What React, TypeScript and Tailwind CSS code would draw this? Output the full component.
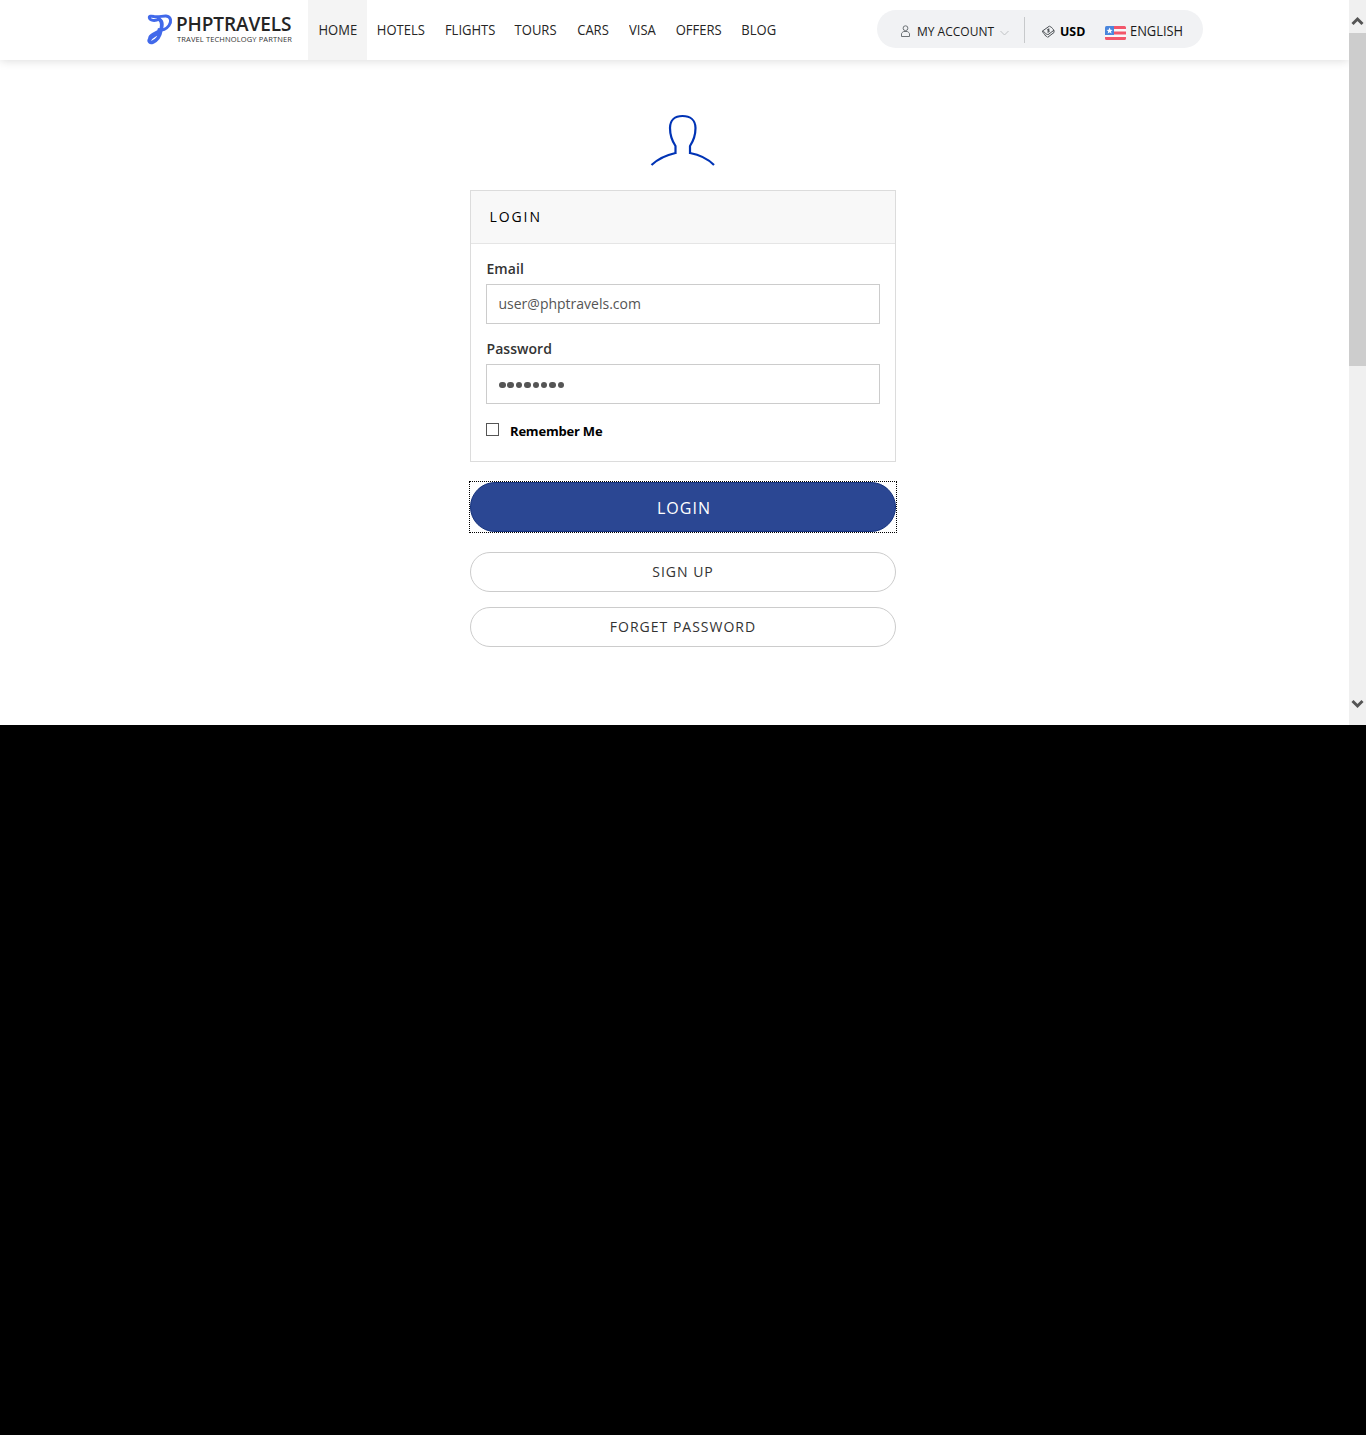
import React from "react";

const navItems = [
  { label: "HOME", width: "w-[59px] bg-[#f4f4f4]" },
  { label: "HOTELS", width: "w-[68px]" },
  { label: "FLIGHTS", width: "w-[70px]" },
  { label: "TOURS", width: "w-[62px]" },
  { label: "CARS", width: "w-[52px]" },
  { label: "VISA", width: "w-[47px]" },
  { label: "OFFERS", width: "w-[66px]" },
  { label: "BLOG", width: "w-[54px]" },
];

function Logo() {
  return (
    <a href="#" className="ml-[147px] mt-[14px] flex h-8 w-[161px] shrink-0">
      <svg width="26" height="32" viewBox="0 0 26 32" fill="none" stroke="#4169ea" strokeLinecap="round" strokeLinejoin="round">
        <path d="M12 5C8 7.500 3 6.500 2.400 4C2 2.200 4 1.800 7 2.500C12 3.500 15 1.800 19 2C24.500 2.500 24.500 8 22 11.500C19.500 15 15 17 12 15.500" strokeWidth="3" />
        <path d="M12.500 5.500C16 8 15 12 14 16C13 22 9.500 26.500 6 28C3 29.200 1.500 27.500 2.500 25.500C4.500 22 9.500 21 12.500 17.500" strokeWidth="3.600" />
        <path d="M2.500 23.500C4 19 9 19.500 13 16" strokeWidth="2.500" />
      </svg>
      <span className="flex w-[120px] flex-col">
        <span className="block h-[21px] w-[120px] whitespace-nowrap pl-[3px] text-[19px] font-semibold leading-[20px] tracking-[-0.1px] text-[#252525]">PHPTRAVELS</span>
        <span className="block h-[9px] whitespace-nowrap pl-[4px] text-[7.500px] leading-[9px] tracking-[0.130px] text-[#333]">TRAVEL TECHNOLOGY PARTNER</span>
      </span>
    </a>
  );
}

function UserIcon() {
  return (
    <svg className="mt-[4px]" width="11" height="13" viewBox="0 0 11 13" fill="none" stroke="#6e7377" strokeWidth="1">
      <circle cx="5.500" cy="3.200" r="2.400" />
      <path d="M1.500 11.500V9C1.500 7.800 2.200 7.500 3.700 6.500H7.300C8.800 7.500 9.500 7.800 9.500 9V11.500Z" />
    </svg>
  );
}

function MoneyIcon() {
  return (
    <svg className="mt-[4px]" width="14" height="14" viewBox="0 0 14 14" fill="none" stroke="#4a4f53" strokeWidth="1">
      <path d="M.5 6L7.500 1C8.500 2.500 10 2 10.500 3.500C10.800 4.500 11.500 4.500 12 5.200L6 9.700C5 9 4.200 9.500 3.500 8.300C3 7 1.700 7.300 .5 6Z" />
      <path d="M.5 6C1 8.500 2.500 8.500 3 10C4 12 5 11 5.700 12.300L12 7.500V5.200" />
      <path d="M7.500 4.300C6 3.700 5.200 4.700 6.300 5.400C7.800 6 7 7.500 5.300 6.800" strokeWidth="1.200" />
    </svg>
  );
}

function Flag() {
  return (
    <svg className="mt-[5px]" width="21" height="14" viewBox="0 0 21 14">
      <rect width="21" height="14" rx="1.500" fill="#f7f8fa" />
      <path d="M9 0H19.500Q21 0 21 1.500V3H9ZM9 5.500H21V8.500H9ZM0 11H21V12.500Q21 14 19.500 14H1.500Q0 14 0 12.500Z" fill="#f2566a" />
      <path d="M1.500 0H9V9H0V1.500Q0 0 1.500 0Z" fill="#4a86dc" />
      <path d="M4.600 1.600L5.500 3.700L7.700 3.900L6 5.300L6.500 7.500L4.600 6.300L2.700 7.500L3.200 5.300L1.500 3.900L3.700 3.700Z" fill="#fff" />
    </svg>
  );
}

function Header() {
  return (
    <header className="flex h-[60px] w-[1349px] bg-white shadow-[0_0_10px_rgba(0,0,0,0.17)]">
      <Logo />
      <nav className="flex w-[569px] shrink-0 text-[14px] text-[#252525]">
        {navItems.map((item) => (
          <a key={item.label} href="#" className={`flex h-[60px] shrink-0 items-center justify-center whitespace-nowrap pb-px ${item.width}`}>
            <span className="scale-x-[0.93]">{item.label}</span>
          </a>
        ))}
      </nav>
      <div className="mt-[10px] flex h-[38px] w-[326px] shrink-0 rounded-full bg-[#f1f2f4] pl-[23px] pt-[11px] text-[12px] leading-5 text-[#1b1b1b]">
        <span className="w-[17px]"><UserIcon /></span>
        <span className="w-[83px] origin-left scale-x-[0.96] whitespace-nowrap pt-px text-[12.500px]">MY ACCOUNT</span>
        <svg className="mt-[9px]" width="9" height="7" viewBox="0 0 9 7" fill="none" stroke="#bfc2c4"><path d="M.5 1L4.500 5L8.500 1" /></svg>
        <span className="-mt-[4px] ml-[15px] h-[26px] w-px bg-[#c7c9cb]" />
        <span className="ml-[17px] w-[18px]"><MoneyIcon /></span>
        <span className="w-[45px] origin-left scale-x-[0.95] text-[13px] font-bold text-black">USD</span>
        <Flag />
        <span className="ml-[4px] origin-left scale-x-[0.92] text-[14px]">ENGLISH</span>
      </div>
    </header>
  );
}

function Scrollbar() {
  return (
    <div className="flex h-[725px] w-[17px] shrink-0 flex-col bg-[#f0f0f0]">
      <div className="flex h-[33px] justify-center pt-[16px]">
        <svg width="13" height="11" viewBox="0 0 13 11" fill="none" stroke="#555" strokeWidth="3"><path d="M1.500 8L6.500 3L11.500 8" /></svg>
      </div>
      <div className="h-[333px] bg-[#cdcdcd]" />
      <div className="mt-[332px] flex justify-center">
        <svg width="13" height="11" viewBox="0 0 13 11" fill="none" stroke="#555" strokeWidth="3"><path d="M1.500 3L6.500 8L11.500 3" /></svg>
      </div>
    </div>
  );
}

function LoginForm() {
  return (
    <main className="ml-[470px] w-[426px]">
      <svg className="ml-[180px] mt-[54px] block" width="66" height="53" viewBox="0 0 66 53" fill="none" stroke="#0033b5" strokeWidth="2.200">
        <path d="M1.500 51C8 45 14 41.500 25.500 39V32C21.500 26 20 20 20 14C20 6 25 2 32.500 2S45.500 6 45.500 14C45.500 20 44 26 40 32V39C51 41 58 45 64 51" />
      </svg>
      <section className="mt-[23px] h-[272px] border border-[#dcdcdc] bg-white">
        <h1 className="h-[53px] border-b border-[#e5e5e5] bg-[#f8f8f8] pl-[18.500px] text-[14px] leading-[52px] tracking-[1.900px] text-black">LOGIN</h1>
        <div className="px-[15px] pt-[15px]">
          <label className="block h-[25px] pl-[0.500px] text-[14px] font-semibold leading-5 tracking-[0.050px] text-[#333]">Email</label>
          <input className="block h-10 w-full border border-[#ccc] bg-white pb-[2px] pl-[11.500px] text-[14px] text-[#555] outline-none" defaultValue="user@phptravels.com" />
          <label className="mt-[15px] block h-[25px] pl-[0.500px] text-[14px] font-semibold leading-5 tracking-[0.050px] text-[#333]">Password</label>
          <div className="flex h-10 items-center gap-[1.900px] border border-[#ccc] pl-[12px] pt-[2px]">
            {[0, 1, 2, 3, 4, 5, 6, 7].map((n) => (
              <span key={n} className="h-[6.500px] w-[6.500px] rounded-full bg-[#555]" />
            ))}
          </div>
          <div className="mt-[17px] flex text-black">
            <span className="mt-[2px] h-[13px] w-[13px] border border-[#555] bg-white" />
            <span className="ml-[11px] text-[13px] font-bold leading-[21px] tracking-[-0.200px]">Remember Me</span>
          </div>
        </div>
      </section>
      <button className="-ml-px mt-[19px] block h-[52px] w-[428px] border border-dotted border-black">
        <span className="flex h-[50px] items-center justify-center rounded-full border border-[#15327c] bg-[#2b4793] pl-[2px] pt-[2px] text-[16px] tracking-[1px] text-white">LOGIN</span>
      </button>
      <a href="#" className="mt-[19px] flex h-10 items-center justify-center rounded-full border border-[#ccc] pb-[2px] text-[14px] tracking-[1px] text-[#333]">SIGN UP</a>
      <a href="#" className="mt-[15px] flex h-10 items-center justify-center rounded-full border border-[#ccc] pb-[2px] text-[14px] tracking-[1px] text-[#333]">FORGET PASSWORD</a>
    </main>
  );
}

export default function App() {
  return (
    <div className="h-[1435px] w-[1366px] overflow-hidden bg-black font-['Open_Sans',sans-serif]">
      <div className="flex h-[725px] overflow-hidden bg-white">
        <div className="w-[1349px] shrink-0 overflow-hidden">
          <Header />
          <LoginForm />
        </div>
        <Scrollbar />
      </div>
    </div>
  );
}
